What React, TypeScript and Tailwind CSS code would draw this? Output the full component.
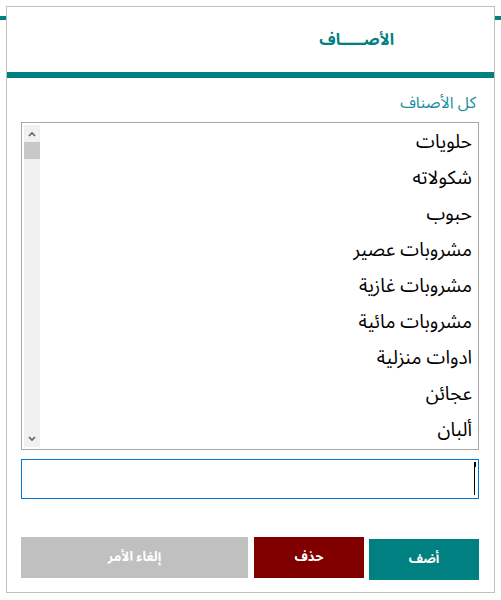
const items = [
  "حلويات",
  "شكولاته",
  "حبوب",
  "مشروبات عصير",
  "مشروبات غازية",
  "مشروبات مائية",
  "ادوات منزلية",
  "عجائن",
  "ألبان",
];

const font = "font-['Noto_Sans_Arabic','DejaVu_Sans',sans-serif]";

export default function App() {
  return (
    <div className={`relative min-h-[600px] bg-white pt-[6px] ${font}`}>
      <div className="absolute left-0 right-0 top-[16px] h-[4px] bg-[#008080]" />
      <div
        dir="rtl"
        className="relative mx-[6px] flex h-[587px] flex-col border border-[#c0c0c0] bg-white"
      >
        <div className="flex h-[65px] items-center pr-[100px]">
          <h1 className="text-[16px] font-bold text-[#008080]">الأصـــــاف</h1>
        </div>
        <div className="h-[6px] bg-[#008080]" />

        <div className="flex flex-col pl-[14px] pr-[15px]">
          <div className="mt-[14px] pr-[3px] text-[16px] leading-[22px] text-[#1b8c9c]">كل الأصناف</div>

          <div className="mt-[8px] flex h-[328px] border border-[#a9a9a9] p-[2px]">
            <ul className="flex-1 pr-[4px] text-[19px] text-black">
              {items.map((it) => (
                <li key={it} className="flex h-[36px] items-center pb-[3px]">
                  <span className="leading-[22px]">{it}</span>
                </li>
              ))}
            </ul>
            <div className="flex w-[16px] flex-col bg-[#f0f0f0]">
              <div className="flex h-[17px] items-center justify-center">
                <svg width="8" height="6" viewBox="0 0 8 6">
                  <path d="M1 5 L4 2 L7 5" fill="none" stroke="#606060" strokeWidth="1.6" />
                </svg>
              </div>
              <div className="h-[17px] bg-[#c8c8c8]" />
              <div className="flex-1" />
              <div className="flex h-[17px] items-center justify-center">
                <svg width="8" height="6" viewBox="0 0 8 6">
                  <path d="M1 1 L4 4 L7 1" fill="none" stroke="#606060" strokeWidth="1.6" />
                </svg>
              </div>
            </div>
          </div>

          <div className="relative mt-[9px] h-[40px] border border-[#0078d7] bg-white">
            <input className="h-full w-full bg-transparent px-[4px] text-[15px] outline-none" />
            <div className="absolute right-[3px] top-[2px] h-[33px] w-px bg-black" />
            <div className="absolute right-[2px] top-[2px] h-[5px] w-[2px] bg-black" />
          </div>

          <div className="mt-[38px] flex items-start gap-[6px]">
            <button className="-ml-[1px] mt-[2px] h-[41px] w-[110px] bg-[#008080] text-[13px] font-bold text-white">
              أضف
            </button>
            <button className="h-[41px] w-[110px] bg-[#800000] text-[13px] font-bold text-white">
              حذف
            </button>
            <button className="h-[41px] flex-1 bg-[#c0c0c0] text-[13px] font-bold text-white">
              إلغاء الأمر
            </button>
          </div>
        </div>
      </div>
    </div>
  );
}
